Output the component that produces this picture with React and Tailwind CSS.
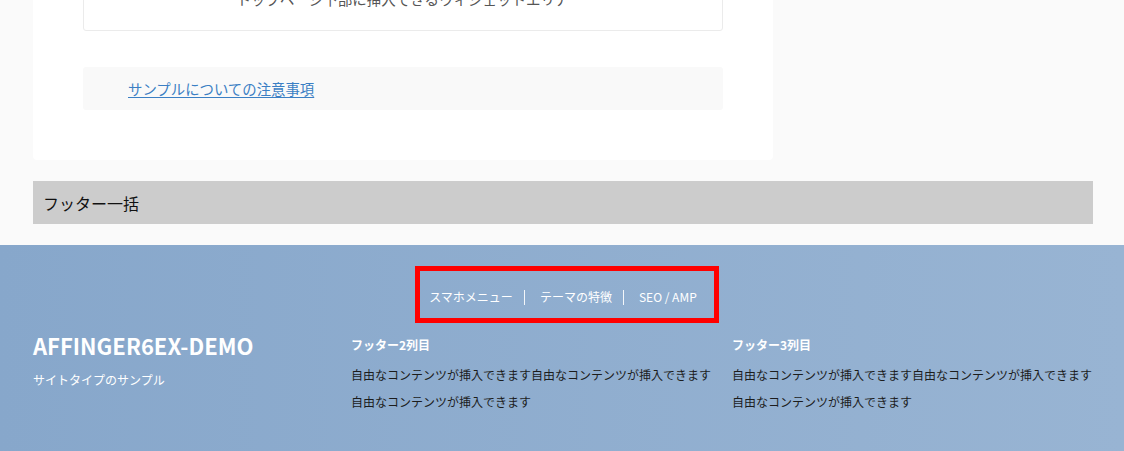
import React from "react";

const jp = { fontFamily: '"Noto Sans CJK JP", "Noto Sans", sans-serif' };

const navItems = ["スマホメニュー", "テーマの特徴", "SEO / AMP"];

const FooterColumn = ({ title, lines, className }) => (
  <div className={className}>
    <h4 className="text-[12px] font-bold text-white leading-[18px]">{title}</h4>
    <div className="mt-[7px] text-[12px] leading-[27px] text-[#1c1c1c]">
      {lines.map((line, i) => (
        <p key={i}>{line}</p>
      ))}
    </div>
  </div>
);

export default function App() {
  const body = [
    "自由なコンテンツが挿入できます自由なコンテンツが挿入できます",
    "自由なコンテンツが挿入できます",
  ];

  return (
    <div className="w-[1124px] h-[451px] overflow-hidden bg-[#fafafa]" style={jp}>
      {/* main content card */}
      <div className="ml-[33px] w-[740px] -mt-[37px] bg-white rounded-b-[4px] px-[50px] pb-[50px]">
        <div className="border border-[#ebebeb] rounded-[3px] bg-white pt-[24px] pb-[20px] text-center">
          <p className="text-[14.5px] leading-[22px] text-[#555]">
            トップページ下部に挿入できるウィジェットエリア
          </p>
        </div>
        <div className="mt-[36px] h-[43px] rounded-[3px] bg-[#f9f9f9] pl-[45px] flex items-center">
          <a href="#" className="text-[14.4px] text-[#3b7fc4] underline underline-offset-2">
            サンプルについての注意事項
          </a>
        </div>
      </div>

      {/* footer bulk bar */}
      <div className="mt-[21px] ml-[33px] w-[1060px] h-[43px] bg-[#cccccc] pl-[10px] flex items-center">
        <span className="text-[16px] text-[#111]">フッター一括</span>
      </div>

      {/* footer */}
      <footer className="mt-[21px] h-[300px] bg-gradient-to-r from-[#87a7cb] to-[#98b4d3] pt-[21px]">
        <div className="flex justify-center">
          <ul className="ml-[10px] border-[5px] border-[#ff0000] pl-[9px] pr-[17px] pt-[17px] pb-[12px] flex items-center text-[12px] leading-[18px] text-white">
            {navItems.map((item, i) => (
              <li key={item} className="flex items-center">
                {i > 0 && <span className="ml-[11px] mr-[15px] w-px h-[15px] bg-white/90" />}
                <span>{item}</span>
              </li>
            ))}
          </ul>
        </div>

        <div className="mt-[7px] ml-[33px] w-[1060px] flex">
          <div className="w-[318px]">
            <h3 className="text-[22px] font-bold text-white leading-[30px]">
              AFFINGER6EX-DEMO
            </h3>
            <p className="mt-[10px] text-[12px] leading-[20px] text-white">サイトタイプのサンプル</p>
          </div>
          <FooterColumn className="w-[381px] pt-[6px]" title="フッター2列目" lines={body} />
          <FooterColumn className="flex-1 pt-[6px]" title="フッター3列目" lines={body} />
        </div>
      </footer>
    </div>
  );
}
